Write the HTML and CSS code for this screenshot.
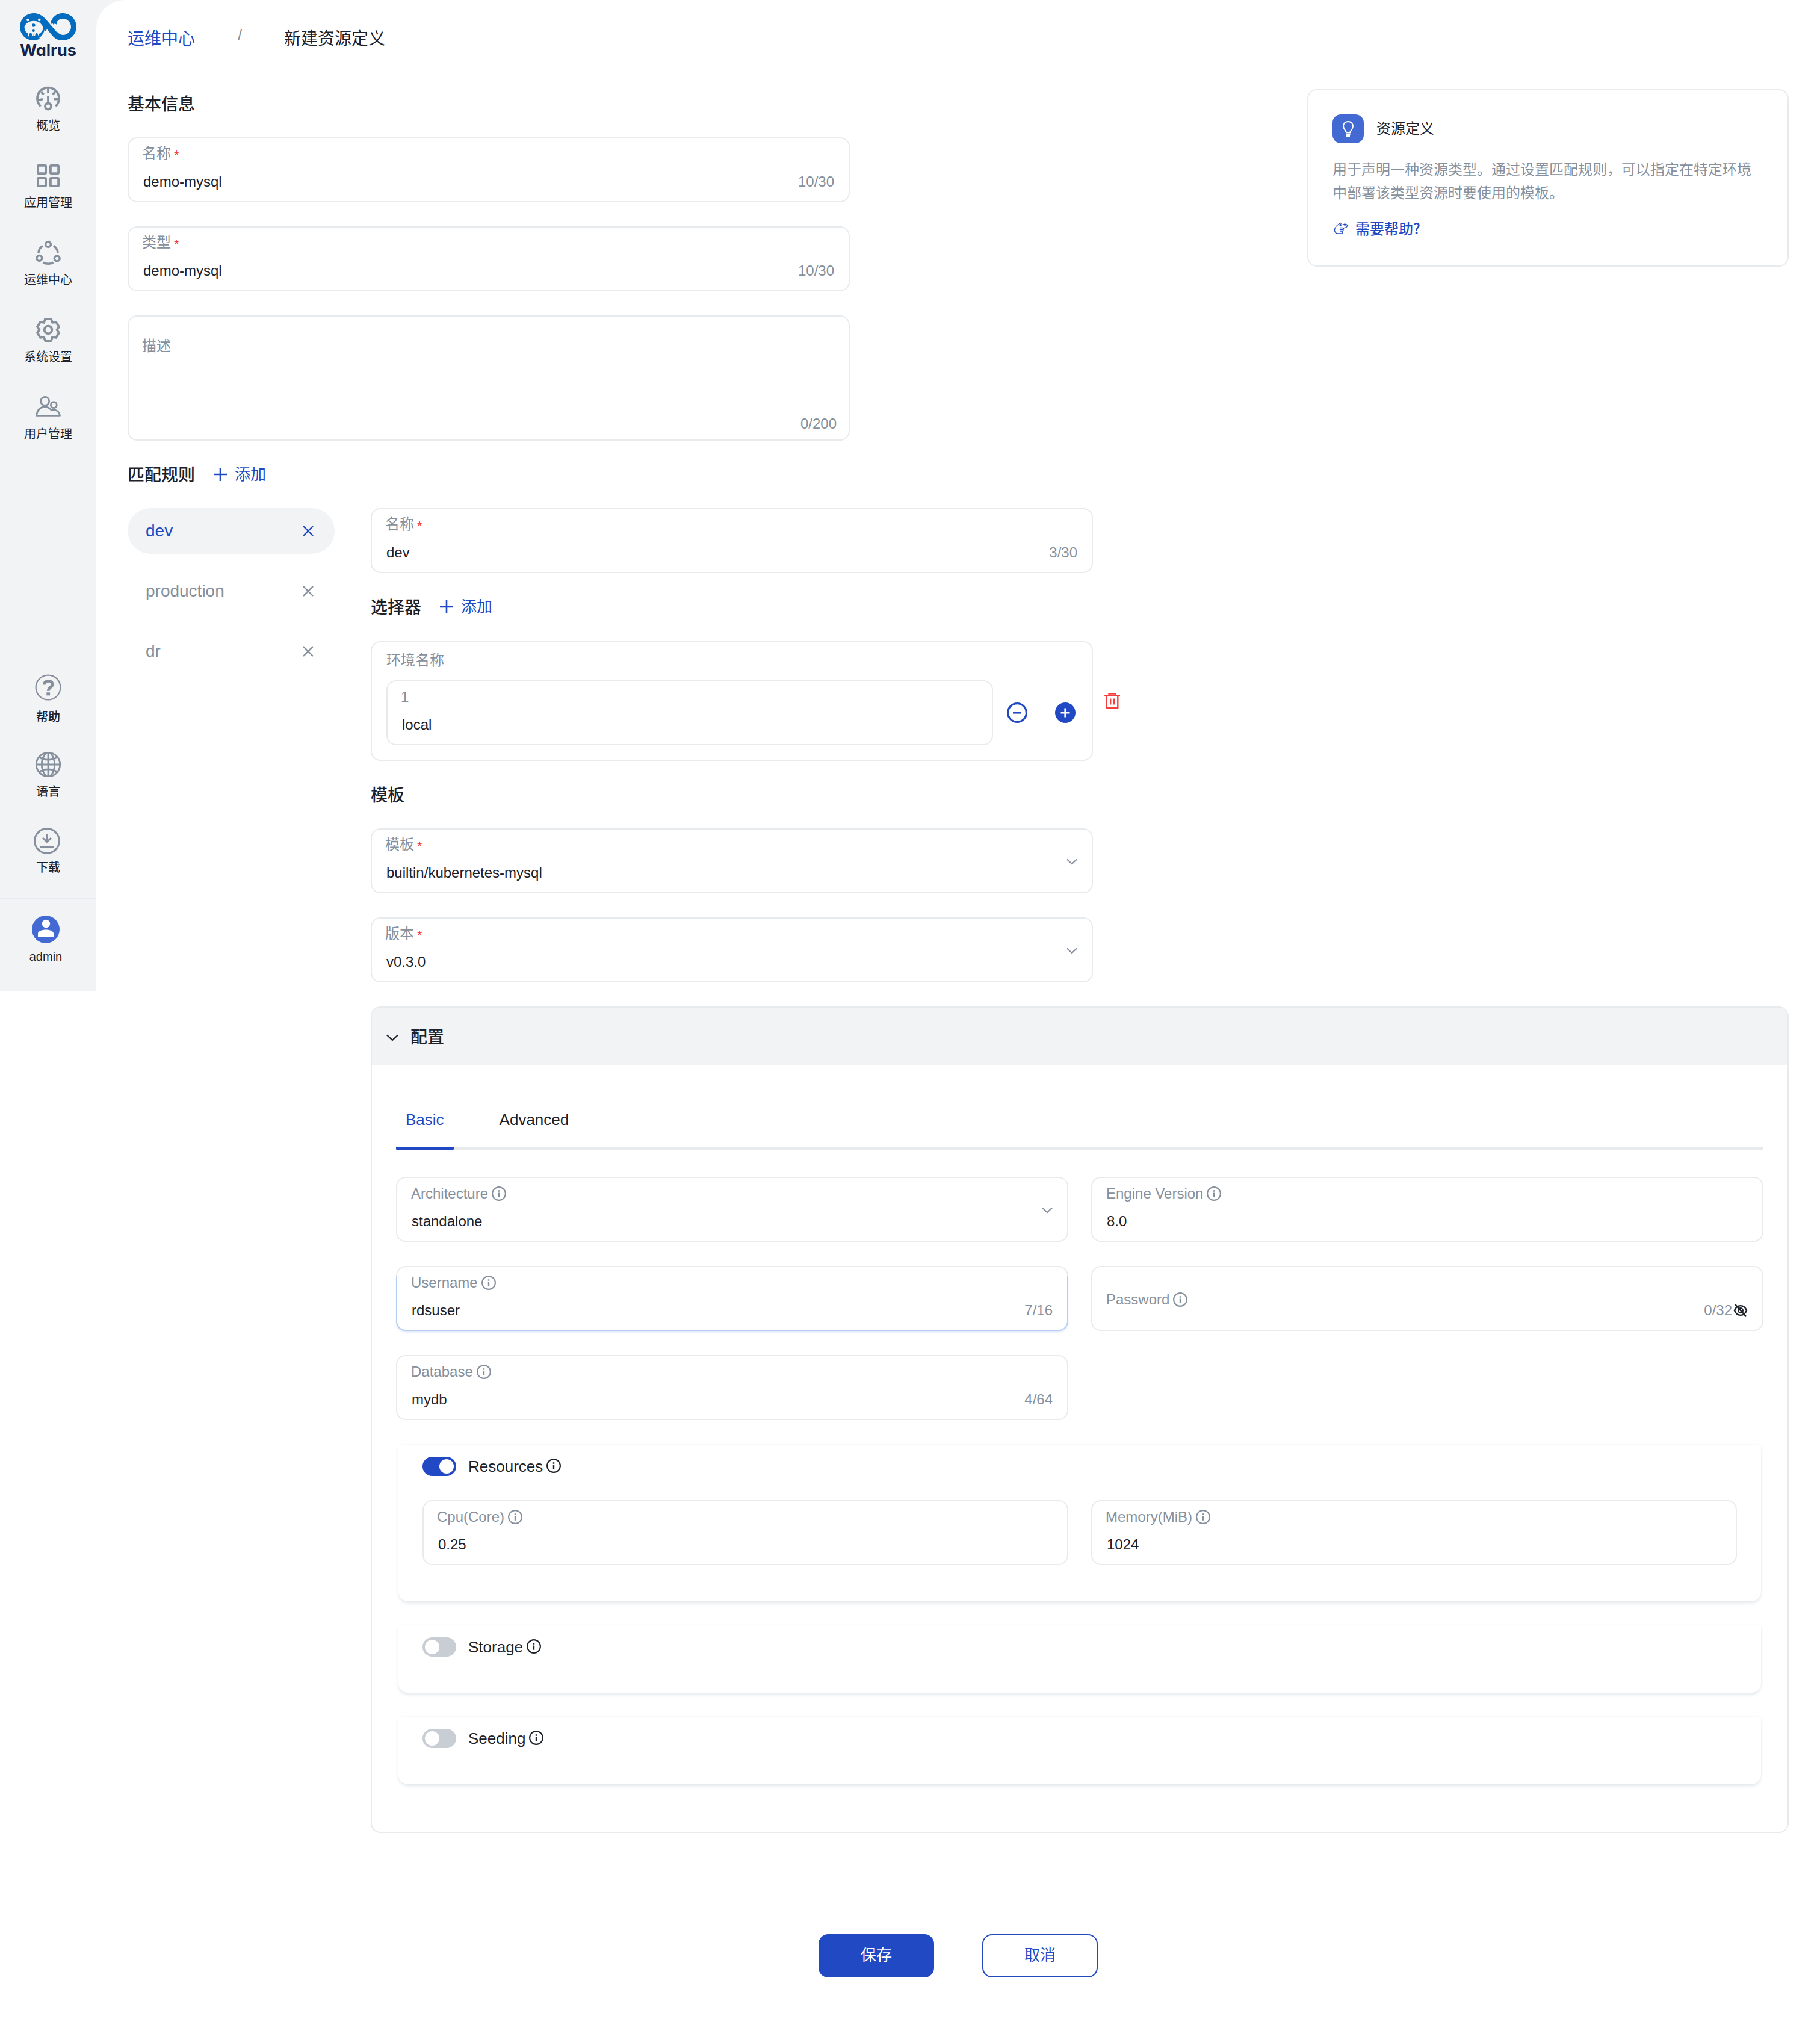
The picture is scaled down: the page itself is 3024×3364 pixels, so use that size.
FILE: index.html
```html
<!DOCTYPE html>
<html lang="zh-CN">
<head>
<meta charset="utf-8">
<title>新建资源定义</title>
<link rel="stylesheet" href="styles.css">
</head>
<body>
<svg class="sprite" aria-hidden="true">
  <symbol id="info" viewBox="0 0 24 24"><circle cx="12" cy="12" r="10.9" fill="none" stroke="currentColor" stroke-width="2.1"/><path d="M10.8 6.3h2.4v2.5h-2.4zM10.8 10.4h2.4v7.4h-2.4z" fill="currentColor"/></symbol>
  <symbol id="close" viewBox="0 0 18 18"><path d="M1 1l16 16M17 1L1 17" fill="none" stroke="currentColor" stroke-width="2.4"/></symbol>
  <symbol id="plus" viewBox="0 0 22 22"><path d="M11 0v22M0 11h22" fill="none" stroke="currentColor" stroke-width="2.6"/></symbol>
  <symbol id="down" viewBox="0 0 20 12"><path d="M1 1.5l9 8.5 9-8.5" fill="none" stroke="currentColor" stroke-width="2.3"/></symbol>
</svg>
<div class="shell">
  <aside class="sidebar">
    <div class="brand">
      <svg class="brand-mark" viewBox="0 0 94 45">
        <circle cx="22.5" cy="22.5" r="22.5" fill="#046cbe"/>
        <path d="M22 0c10 0 16 4 22 11l17 20c3 4 7 5 11 5v9c-9 0-14-3-19-9L30 8z" fill="#046cbe"/>
        <path d="M51 18c1-11 10-18 20-18 13 0 23 10 23 22.500S84 45 71 45c-7 0-12-3-15-7l6-7c3 3 6 5 9.500 5 7.500 0 13.500-6 13.500-13.500S79 9 71.500 9c-6 0-9 3-10.500 7l.5 3-3.500-2-2 2-1.500-2z" fill="#046cbe"/>
        <path d="M7.500 25c0-5 3-8 6.500-10 5-3 13-3 18 0 3 2 6 6 7 9-1 5-3 8-7 10l-.5 5-3-7h-2l-1.500 6-2-1-.2-5-.2 5-2 1-1.500-6h-2l-3 7-.5-6c-3-1-5.600-4-5.600-8zM41 27l3 4c-2 5-5 9-9 12l-3-2c4-3 8-8 9-14z" fill="#f1f3f5"/>
        <circle cx="13.400" cy="11" r="2.300" fill="#f1f3f5"/><circle cx="32.300" cy="11" r="2.300" fill="#f1f3f5"/>
        <circle cx="22.800" cy="20" r="2.800" fill="#046cbe"/><circle cx="22.800" cy="29" r="2" fill="#046cbe"/>
      </svg>
      <div class="brand-name">Walrus</div>
    </div>
    <nav class="nav">
      <a class="nav-item"><svg width="40" height="40" viewBox="0 0 40 40" fill="none" stroke="currentColor" stroke-width="3.800"><path d="M7.500 32.500A18 18 0 1 1 32.500 32.500"/><path d="M20 3v7M8.500 9l4 4M31.500 9l-4 4M4 22.500l7-2M37 20.500h-7M20 15v13"/><circle cx="20" cy="32.500" r="5"/></svg><span>概览</span></a>
      <a class="nav-item"><svg width="40" height="40" viewBox="0 0 40 40" fill="none" stroke="currentColor" stroke-width="3.800"><rect x="2.900" y="2.900" width="13.200" height="13.200" rx="1"/><rect x="23.900" y="2.900" width="13.200" height="13.200" rx="1"/><rect x="2.900" y="23.900" width="13.200" height="13.200" rx="1"/><rect x="23.900" y="23.900" width="13.200" height="13.200" rx="1"/></svg><span>应用管理</span></a>
      <a class="nav-item"><svg width="42" height="40" viewBox="0 0 42 40" fill="none" stroke="currentColor" stroke-width="3.500"><circle cx="21" cy="6" r="4.400"/><circle cx="6.300" cy="29" r="4.400"/><circle cx="35.700" cy="29.500" r="4.400"/><path d="M12 8.500C7.500 11.500 5 15.500 5 20M30 8.500c4.500 3 7 7.500 7 12.500M12.500 36c5 3 12 3 17 0"/></svg><span>运维中心</span></a>
      <a class="nav-item"><svg width="40" height="40" viewBox="0 0 40 40" fill="none" stroke="currentColor" stroke-width="3.800" stroke-linejoin="round"><path d="M15 2H25L27 8 33 7 38 15 34.500 20 38 25 33 33 27 32 25 38H15L13 32 7 33 2 25 5.500 20 2 15 7 7 13 8Z"/><circle cx="20" cy="20" r="6.300"/></svg><span>系统设置</span></a>
      <a class="nav-item"><svg width="42" height="40" viewBox="0 0 42 40" fill="none" stroke="currentColor" stroke-width="2.800" stroke-linejoin="round"><circle cx="15.700" cy="10.500" r="7"/><circle cx="30.300" cy="16.700" r="5"/><path d="M1.500 34.300C3 25 8 20 15.500 20c5 0 8.500 2 11 5.500 7-2 12.500 1.500 14 8.800z"/></svg><span>用户管理</span></a>
    </nav>
    <div class="tools">
      <a class="tool tool-help"><svg width="44" height="44" viewBox="0 0 44 44"><circle cx="22" cy="22" r="20.400" fill="none" stroke="currentColor" stroke-width="2.200"/><path d="M15.300 17.500c0-4 3-6.200 7-6.200s6.900 2 6.900 5.500c0 5-6.900 5-6.900 11" fill="none" stroke="currentColor" stroke-width="4.800"/><path d="M19.300 30.300h5.800v5h-5.800z" fill="currentColor"/></svg><span>帮助</span></a>
      <a class="tool tool-lang"><svg width="44" height="44" viewBox="0 0 44 44" fill="none" stroke="currentColor" stroke-width="2.800"><circle cx="22" cy="22" r="19.700"/><path d="M22 2v40M2 22h40M18 3C9 14 9 30 18 41M26 3c9 11 9 27 0 38M7 10c9 5.500 21 5.500 30 0M7 34c9-5.500 21-5.500 30 0"/></svg><span>语言</span></a>
      <a class="tool tool-download"><svg width="44" height="44" viewBox="0 0 44 44" fill="none" stroke="currentColor" stroke-width="3"><circle cx="22" cy="22" r="20.400"/><path d="M22 10v12M15 17l7 6.500 7-6.500M11 31.500h22"/></svg><span>下载</span></a>
    </div>
    <div class="account">
      <svg width="46" height="46" viewBox="0 0 46 46"><circle cx="23" cy="23" r="23" fill="#4369d3"/><circle cx="23.500" cy="13.500" r="6.700" fill="#fff"/><path d="M10 36v-6c0-4 6-6.500 13.200-6.500S36 26 36 30v6z" fill="#fff"/></svg>
      <span>admin</span>
    </div>
  </aside>

  <main class="main">
    <header class="crumbs"><a>运维中心</a><i>/</i><b>新建资源定义</b></header>
    <div class="top">
      <section class="form">
        <h2 class="title">基本信息</h2>
        <div class="stack">
          <div class="field"><div class="label">名称<em>*</em></div><div class="value"><span>demo-mysql</span><span class="count">10/30</span></div></div>
          <div class="field"><div class="label">类型<em>*</em></div><div class="value"><span>demo-mysql</span><span class="count">10/30</span></div></div>
          <div class="field area"><div class="label">描述</div><div class="value"><span class="count">0/200</span></div></div>
        </div>
      </section>
      <aside class="tip">
        <div class="tip-head">
          <span class="tip-icon"><svg width="18" height="26" viewBox="0 0 18 26" fill="none" stroke="#fff" stroke-width="2"><path d="M6 19.500c0-3-5-5.500-5-11C1 4 4.500 1 9 1s8 3 8 7.500c0 5.500-5 8-5 11zM5.500 22.300h7M6 25h6"/></svg></span>
          <span>资源定义</span>
        </div>
        <p>用于声明一种资源类型。通过设置匹配规则，可以指定在特定环境中部署该类型资源时要使用的模板。</p>
        <a class="tip-link"><svg width="24" height="22" viewBox="0 0 24 22" fill="none" stroke="currentColor" stroke-width="1.300" stroke-linejoin="round"><path d="M11 2.500C6 6 1.500 9 1.500 14c0 4 2.500 6 6 6H13c2 0 2.500-2.500 1-3 2 0 2.500-3 1-3.300 2 0 2.200-3 .5-3.400M15 10.500C19 11 22.500 9.500 22.500 7S20 3.800 17 4.500L10 7l2-3c.6-1-.2-2-1-1.500M10.500 10.500h5M11 13.700h4M11 17h3M17 7.200h3"/></svg><span>需要帮助?</span></a>
      </aside>
    </div>

    <div class="heading"><h2 class="title">匹配规则</h2><a class="add"><svg width="22" height="22"><use href="#plus"/></svg>添加</a></div>

    <div class="rules">
      <div class="rule-list">
        <div class="rule active"><span>dev</span><svg width="18" height="18"><use href="#close"/></svg></div>
        <div class="rule"><span>production</span><svg width="18" height="18"><use href="#close"/></svg></div>
        <div class="rule"><span>dr</span><svg width="18" height="18"><use href="#close"/></svg></div>
      </div>

      <div class="rule-body">
        <div class="field narrow"><div class="label">名称<em>*</em></div><div class="value"><span>dev</span><span class="count">3/30</span></div></div>
        <div class="heading"><h2 class="title">选择器</h2><a class="add"><svg width="22" height="22"><use href="#plus"/></svg>添加</a></div>

        <div class="selector-row">
          <div class="selector">
            <div class="selector-name">环境名称</div>
            <div class="selector-line">
              <div class="field"><div class="label">1</div><div class="value"><span>local</span></div></div>
              <svg width="34" height="34" viewBox="0 0 34 34" fill="none" stroke="currentColor" stroke-width="3.200"><circle cx="17" cy="17" r="15.400"/><path d="M10 17h14"/></svg>
              <svg width="34" height="34" viewBox="0 0 34 34"><circle cx="17" cy="17" r="17" fill="currentColor"/><path d="M17 9.500v15M9.500 17h15" stroke="#fff" stroke-width="3.200"/></svg>
            </div>
          </div>
          <svg class="trash" width="26" height="27" viewBox="0 0 26 27" fill="none" stroke="currentColor" stroke-width="2.400"><path d="M0 4.200h26M7.500 3V1.500h11V3M3.700 5v20.300h18.600V5M10.200 9.500v10M15.800 9.500v10"/></svg>
        </div>

        <div class="heading"><h2 class="title">模板</h2></div>
        <div class="stack">
          <div class="field narrow select"><div class="label">模板<em>*</em></div><div class="value"><span>builtin/kubernetes-mysql</span></div><svg class="caret"><use href="#down"/></svg></div>
          <div class="field narrow select"><div class="label">版本<em>*</em></div><div class="value"><span>v0.3.0</span></div><svg class="caret"><use href="#down"/></svg></div>
        </div>

        <section class="panel">
          <header class="panel-head"><svg width="20" height="12"><use href="#down"/></svg><span>配置</span></header>
          <div class="panel-body">
            <div class="tabs"><a class="tab on">Basic</a><a class="tab">Advanced</a></div>
            <div class="grid">
              <div class="field select"><div class="label">Architecture<svg class="info"><use href="#info"/></svg></div><div class="value"><span>standalone</span></div><svg class="caret"><use href="#down"/></svg></div>
              <div class="field"><div class="label">Engine Version<svg class="info"><use href="#info"/></svg></div><div class="value"><span>8.0</span></div></div>
              <div class="field focus"><div class="label">Username<svg class="info"><use href="#info"/></svg></div><div class="value"><span>rdsuser</span><span class="count">7/16</span></div></div>
              <div class="field empty"><div class="label">Password<svg class="info"><use href="#info"/></svg></div><div class="value"><span class="count">0/32</span><svg class="eye" width="26" height="24" viewBox="0 0 26 24" fill="none" stroke="currentColor" stroke-width="2.600"><path d="M2 12C6.500.5 19.500.5 24 12 19.500 23.500 6.500 23.500 2 12z"/><circle cx="13" cy="12" r="4.200"/><path d="M3 1l20 22"/></svg></div></div>
              <div class="field"><div class="label">Database<svg class="info"><use href="#info"/></svg></div><div class="value"><span>mydb</span><span class="count">4/64</span></div></div>
            </div>
            <div class="groups">
              <div class="group">
                <div class="group-head"><span class="switch on"></span><span>Resources</span><svg class="info"><use href="#info"/></svg></div>
                <div class="grid">
                  <div class="field number"><div class="label">Cpu(Core)<svg class="info"><use href="#info"/></svg></div><div class="value"><span>0.25</span></div></div>
                  <div class="field number"><div class="label">Memory(MiB)<svg class="info"><use href="#info"/></svg></div><div class="value"><span>1024</span></div></div>
                </div>
              </div>
              <div class="group"><div class="group-head"><span class="switch"></span><span>Storage</span><svg class="info"><use href="#info"/></svg></div></div>
              <div class="group"><div class="group-head"><span class="switch"></span><span>Seeding</span><svg class="info"><use href="#info"/></svg></div></div>
            </div>
          </div>
        </section>
      </div>
    </div>

    <footer class="actions"><button class="btn primary">保存</button><button class="btn">取消</button></footer>
  </main>
</div>
</body>
</html>
```
FILE: styles.css
```css
:root {
  --blue: #2249c4;
  --text: #1d2129;
  --muted: #86909c;
  --line: #e8ebee;
  --fill: #f1f3f5;
}
* { box-sizing: border-box; }
body {
  margin: 0;
  background: #fff;
  color: var(--text);
  font: 24px/32px "Liberation Sans", "Noto Sans CJK SC", sans-serif;
}
svg { display: block; flex: none; overflow: visible; }
.sprite { display: none; }
h2, p { margin: 0; }

.shell { display: grid; grid-template-columns: 160px 1fr; min-height: 3364px; }

/* Sidebar runs under the rounded corner of the main area */
.sidebar {
  display: flex;
  flex-direction: column;
  width: 208px;
  height: 1646px;
  padding-right: 48px;
  background: var(--fill);
  font-size: 20px;
  line-height: 24px;
}
.brand { height: 144px; padding-top: 22px; }
.brand-mark { width: 94px; height: 45px; margin: 0 auto; }
.brand-name {
  margin-top: 1px;
  text-align: center;
  color: #14254c;
  font: 700 27px/32px "Inter", sans-serif;
  font-feature-settings: "cv11";
}
.nav { height: 976px; }
.nav-item, .tool, .account { display: flex; flex-direction: column; align-items: center; }
.nav-item { height: 128px; gap: 13px; }
.nav-item svg, .tool svg { color: var(--muted); }
.tools { height: 372px; font-weight: 500; }
.tool-help { gap: 15px; margin-bottom: 45px; }
.tool-lang { gap: 11px; margin-bottom: 48px; }
.tool-download { gap: 10px; }
.tool-download svg { margin-right: 4px; }
.account { gap: 10px; padding: 27px 8px 0 0; border-top: 2px solid #e8eaed; }

.main {
  padding: 0 52px;
  border-radius: 48px 0 0 0;
  background: #fff;
}
.crumbs { display: flex; height: 148px; padding-top: 45px; font-size: 28px; line-height: 40px; }
.crumbs a { width: 182px; color: var(--blue); }
.crumbs i { width: 78px; margin-top: -7px; padding-left: 1px; color: var(--muted); font-style: normal; font-size: 26px; }
.crumbs b { font-weight: 400; }

.title { height: 40px; font-size: 28px; line-height: 43px; font-weight: 500; }
.top { display: flex; justify-content: space-between; align-items: flex-start; }
.form { width: 1200px; padding-top: 4px; }
.form .title { margin-bottom: 36px; }
.stack { display: flex; flex-direction: column; gap: 40px; }
.heading { display: flex; align-items: center; gap: 31px; margin: 36px 0; }
.add { display: flex; align-items: center; gap: 13px; color: var(--blue); font-size: 26px; line-height: 34px; }

.field {
  display: flex;
  flex-direction: column;
  justify-content: space-between;
  position: relative;
  height: 108px;
  padding: 10px 24px 16px;
  border: 2px solid var(--line);
  border-radius: 16px;
}
.narrow { width: 1200px; }
.label { display: flex; align-items: center; margin-left: -1px; color: var(--muted); }
.label:has(em), .area .label { margin-top: -1px; margin-left: -2px; }
.label em { margin: 5px 0 0 5px; color: #f53f3f; font-style: normal; font-size: 22px; line-height: 27px; }
.value { display: flex; align-items: center; }
.count { margin-left: auto; color: var(--muted); }
.area { height: 208px; padding: 34px 20px 10px 24px; }
.caret { position: absolute; right: 24px; top: 48px; width: 18px; height: 11px; color: var(--muted); }
.info { width: 24px; height: 24px; margin-left: 6px; }
.number .label { margin-left: -2px; }
.empty { padding-top: 38px; }
.empty .label { margin-bottom: -32px; }
.eye { width: 26px; height: 22px; margin-right: -1px; margin-left: 1px; }
.focus::after {
  content: "";
  position: absolute;
  inset: 14px -2px -2px;
  border: 2px solid #b7cff6;
  border-top: 0;
  border-radius: 0 0 16px 16px;
  box-shadow: 0 3px 4px -1px #dbe6fb;
}

.tip {
  width: 800px;
  height: 295px;
  padding: 40px;
  border: 2px solid var(--line);
  border-radius: 16px;
}
.tip-head { display: flex; align-items: center; gap: 21px; height: 48px; }
.tip-icon {
  display: grid;
  place-items: center;
  width: 52px;
  height: 48px;
  border-radius: 14px;
  background: #4369d3;
}
.tip p { margin: 24px 0 23px; color: var(--muted); line-height: 39px; }
.tip-link { display: flex; align-items: center; gap: 12px; padding-left: 2px; color: var(--blue); font-family: "Noto Sans CJK SC", sans-serif; font-weight: 500; }

.rules { display: flex; gap: 60px; }
.rule-list { display: flex; flex-direction: column; gap: 24px; width: 344px; }
.rule {
  display: flex;
  align-items: center;
  justify-content: space-between;
  height: 76px;
  padding: 0 35px 0 30px;
  border-radius: 38px;
  color: var(--muted);
  font-size: 28px;
  line-height: 34px;
}
.rule.active { background: var(--fill); color: var(--blue); }
.rule-body { flex: 1; }

.selector-row { display: flex; align-items: center; gap: 19px; margin-top: 37px; }
.selector { width: 1200px; height: 199px; padding: 14px 24px 0; border: 2px solid var(--line); border-radius: 16px; }
.selector-name { height: 49px; color: var(--muted); }
.selector-line { display: flex; align-items: center; color: var(--blue); }
.selector-line .field { width: 1008px; color: var(--text); }
.selector-line .label { margin-left: -2px; }
.selector-line > svg { margin-left: 23px; }
.selector-line > svg + svg { margin-left: 46px; }
.trash { color: #f53f3f; }

.panel { height: 1373px; margin-top: 40px; border: 2px solid var(--line); border-radius: 16px; overflow: hidden; }
.panel-head {
  display: flex;
  align-items: center;
  gap: 20px;
  height: 96px;
  padding: 3px 24px 0;
  background: var(--fill);
  font-size: 28px;
  font-weight: 500;
}
.panel-body { padding: 0 40px; }
.tabs { display: flex; gap: 60px; height: 141px; margin-bottom: 44px; border-bottom: 6px solid var(--line); border-radius: 3px; }
.tab { height: 141px; padding: 74px 16px 0; font-size: 26px; }
.tab.on { border-bottom: 6px solid var(--blue); border-radius: 3px; color: var(--blue); }
.grid { display: grid; grid-template-columns: 1fr 1fr; gap: 40px 38px; }

.groups { display: flex; flex-direction: column; gap: 40px; margin: 41px 4px 0; }
.group {
  height: 112px;
  padding: 20px 40px;
  border-radius: 0 0 16px 16px;
  box-shadow: 0 4px 6px -1px #e2e7ea, 0 0 4px rgba(0, 0, 0, 0.04);
}
.group:first-child { height: 260px; }
.group-head { display: flex; align-items: center; height: 32px; margin-bottom: 40px; font-size: 26px; }
.group-head .info { margin-top: -2px; margin-left: 6px; }
.switch { width: 56px; height: 32px; margin-right: 20px; padding: 4px; border-radius: 16px; background: #c9cdd4; }
.switch::before { content: ""; display: block; width: 24px; height: 24px; border-radius: 50%; background: #fff; }
.switch.on { background: var(--blue); }
.switch.on::before { margin-left: 24px; }

.actions { display: flex; justify-content: center; gap: 80px; margin-top: 168px; }
.btn {
  width: 192px;
  height: 72px;
  padding: 0 0 2px;
  border: 2px solid var(--blue);
  border-radius: 16px;
  background: #fff;
  color: var(--blue);
  font: inherit;
  font-size: 26px;
}
.btn.primary { background: var(--blue); color: #fff; }
```
